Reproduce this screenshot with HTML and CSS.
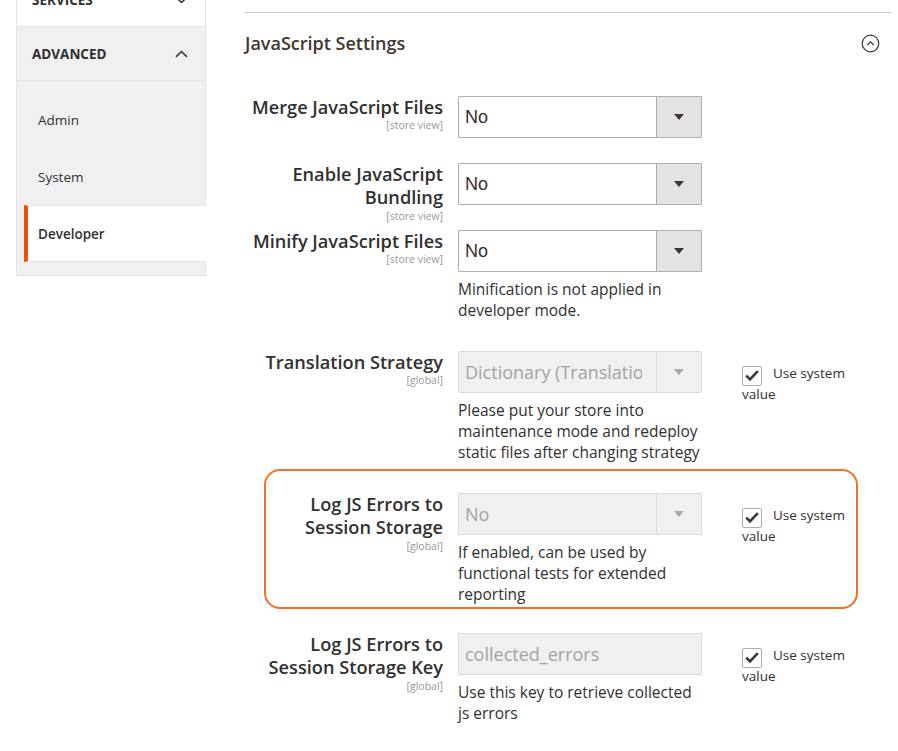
FILE: index.html
```html
<!DOCTYPE html>
<html lang="en">
<head>
<meta charset="utf-8">
<title>Configuration - Developer</title>
<link rel="stylesheet" href="styles.css">
</head>
<body>
<div class="page">
  <aside class="sidebar">
    <div class="nav-section">
      <div class="nav-title">
        <span>SERVICES</span>
        <svg class="chev" width="13" height="8" viewBox="0 0 13 8"><path d="M1 1.2 L6.5 6.5 L12 1.2" fill="none" stroke="#41362f" stroke-width="1.6"/></svg>
      </div>
    </div>
    <div class="nav-section open">
      <div class="nav-title">
        <span>ADVANCED</span>
        <svg class="chev" width="13" height="8" viewBox="0 0 13 8"><path d="M1 6.8 L6.5 1.5 L12 6.8" fill="none" stroke="#41362f" stroke-width="1.6"/></svg>
      </div>
      <ul class="nav-items">
        <li class="nav-item">Admin</li>
        <li class="nav-item">System</li>
        <li class="nav-item active">Developer</li>
      </ul>
    </div>
  </aside>

  <main class="main">
    <section class="config-section">
      <header class="section-head">
        <h2 class="section-title">JavaScript Settings</h2>
        <svg class="collapse" width="19" height="19" viewBox="0 0 19 19"><circle cx="9.5" cy="9.5" r="8.3" fill="none" stroke="#41362f" stroke-width="1.2"/><path d="M6.3 11 L9.5 7.8 L12.7 11" fill="none" stroke="#41362f" stroke-width="1.3"/></svg>
      </header>

      <div class="field">
        <div class="field-label">
          <span class="label-text">Merge JavaScript Files</span>
          <span class="scope">[store view]</span>
        </div>
        <div class="control">
          <div class="select">
            <span class="select-value">No</span>
            <span class="select-arrow"><i class="tri"></i></span>
          </div>
        </div>
      </div>

      <div class="field">
        <div class="field-label">
          <span class="label-text">Enable JavaScript Bundling</span>
          <span class="scope">[store view]</span>
        </div>
        <div class="control">
          <div class="select">
            <span class="select-value">No</span>
            <span class="select-arrow"><i class="tri"></i></span>
          </div>
        </div>
      </div>

      <div class="field">
        <div class="field-label">
          <span class="label-text">Minify JavaScript Files</span>
          <span class="scope">[store view]</span>
        </div>
        <div class="control">
          <div class="select">
            <span class="select-value">No</span>
            <span class="select-arrow"><i class="tri"></i></span>
          </div>
          <p class="note">Minification is not applied in developer mode.</p>
        </div>
      </div>

      <div class="field">
        <div class="field-label">
          <span class="label-text">Translation Strategy</span>
          <span class="scope">[global]</span>
        </div>
        <div class="control">
          <div class="select disabled">
            <span class="select-value">Dictionary (Translation on Storefront side)</span>
            <span class="select-arrow"><i class="tri"></i></span>
          </div>
          <p class="note">Please put your store into maintenance mode and redeploy static files after changing strategy</p>
        </div>
        <label class="use-default"><span class="checkbox"><svg width="20" height="20" viewBox="0 0 20 20"><path d="M4.2 9.6 L8 13.3 L15.8 5.2" fill="none" stroke="#41362f" stroke-width="2.6"/></svg></span>Use system value</label>
      </div>

      <div class="field highlight">
        <div class="field-label">
          <span class="label-text">Log JS Errors to Session Storage</span>
          <span class="scope">[global]</span>
        </div>
        <div class="control">
          <div class="select disabled">
            <span class="select-value">No</span>
            <span class="select-arrow"><i class="tri"></i></span>
          </div>
          <p class="note">If enabled, can be used by functional tests for extended reporting</p>
        </div>
        <label class="use-default"><span class="checkbox"><svg width="20" height="20" viewBox="0 0 20 20"><path d="M4.2 9.6 L8 13.3 L15.8 5.2" fill="none" stroke="#41362f" stroke-width="2.6"/></svg></span>Use system value</label>
      </div>

      <div class="field">
        <div class="field-label">
          <span class="label-text">Log JS Errors to Session Storage Key</span>
          <span class="scope">[global]</span>
        </div>
        <div class="control">
          <div class="input disabled">collected_errors</div>
          <p class="note">Use this key to retrieve collected js errors</p>
        </div>
        <label class="use-default"><span class="checkbox"><svg width="20" height="20" viewBox="0 0 20 20"><path d="M4.2 9.6 L8 13.3 L15.8 5.2" fill="none" stroke="#41362f" stroke-width="2.6"/></svg></span>Use system value</label>
      </div>
    </section>
  </main>
</div>
</body>
</html>
```

FILE: styles.css
```css
html, body {
  margin: 0;
  padding: 0;
  background: #fff;
}

body {
  font-family: "Open Sans", "Noto Sans", sans-serif;
  color: #303030;
  overflow: hidden;
}

.page {
  display: flex;
  align-items: flex-start;
  padding-left: 16px;
}

/* ---------- sidebar ---------- */
.sidebar {
  width: 190px;
  flex-shrink: 0;
  box-sizing: border-box;
  margin-top: -27px;
  border-left: 1px solid #e3e3e3;
  border-right: 1px solid #e3e3e3;
}

.nav-section {
  background: #fff;
}

.nav-section.open {
  background: #f0f0f0;
}

.nav-title {
  height: 53px;
  border-bottom: 1px solid #e3e3e3;
  display: flex;
  align-items: center;
  justify-content: space-between;
  padding: 0 17px 0 15px;
  font-size: 13.5px;
  font-weight: 700;
  color: #303030;
}

.chev {
  display: block;
}

.nav-items {
  list-style: none;
  margin: 0;
  padding: 10px 0 13px;
  border-bottom: 1px solid #e3e3e3;
}

.nav-item {
  height: 57px;
  box-sizing: border-box;
  display: flex;
  align-items: center;
  padding-left: 21px;
  font-size: 13.5px;
  color: #303030;
}

.nav-item.active {
  margin-left: 7px;
  margin-right: -1px;
  padding-left: 10px;
  border-left: 4px solid #eb5202;
  border-top: 1px solid #e3e3e3;
  border-bottom: 1px solid #e3e3e3;
  background: #fff;
  font-weight: 600;
}

/* ---------- main ---------- */
.main {
  margin-left: 39px;
  width: 646px;
  padding-top: 12px;
}

.config-section {
  border-top: 1px solid #cccccc;
}

.section-head {
  display: flex;
  align-items: center;
  justify-content: space-between;
  padding: 18px 0 41px;
}

.section-title {
  margin: 0;
  font-size: 18px;
  line-height: 24px;
  font-weight: 600;
  color: #41362f;
}

.collapse {
  display: block;
  margin-right: 11px;
}

.field {
  display: flex;
  align-items: flex-start;
  margin-bottom: 25px;
}

.field.highlight {
  position: relative;
  margin-bottom: 23px;
}

.field.highlight::before {
  content: "";
  position: absolute;
  top: -24px;
  left: 19px;
  right: 33px;
  bottom: 1px;
  border: 2px solid #f5711e;
  border-radius: 16px;
  pointer-events: none;
}

.field-label {
  width: 198px;
  flex-shrink: 0;
  text-align: right;
  margin-top: 0;
  margin-bottom: -18px;
}

.label-text {
  display: block;
  font-size: 18.2px;
  line-height: 23.4px;
  font-weight: 600;
  color: #303030;
}

.scope {
  display: block;
  font-size: 10.5px;
  line-height: 12.6px;
  color: #999;
}

.control {
  width: 244px;
  flex-shrink: 0;
  margin-left: 15px;
}

.select {
  display: flex;
  height: 42px;
  box-sizing: border-box;
  border: 1px solid #adadad;
  border-radius: 1px;
  background: #fff;
}

.select-value {
  flex: 1;
  min-width: 0;
  margin-right: 14px;
  padding-left: 6px;
  line-height: 40px;
  font-family: "Liberation Sans", Arial, sans-serif;
  font-size: 18px;
  color: #303030;
  white-space: nowrap;
  overflow: hidden;
}

.select-arrow {
  width: 44px;
  flex-shrink: 0;
  border-left: 1px solid #adadad;
  background: #e3e3e3;
  display: flex;
  align-items: center;
  justify-content: center;
}

.tri {
  display: block;
  width: 0;
  height: 0;
  border-left: 5px solid transparent;
  border-right: 5px solid transparent;
  border-top: 6px solid #41362f;
}

.select.disabled {
  background: #f0f0f0;
  border-color: #dadada;
}

.select.disabled .select-value {
  font-family: "Open Sans", "Noto Sans", sans-serif;
  color: #a3a3a3;
}

.select.disabled .select-arrow {
  background: transparent;
  border-left-color: #dadada;
}

.select.disabled .tri {
  border-top-color: #a8a8a8;
}

.input {
  height: 42px;
  box-sizing: border-box;
  border: 1px solid #dadada;
  border-radius: 1px;
  background: #f0f0f0;
  padding-left: 6px;
  line-height: 40px;
  font-size: 18px;
  color: #a3a3a3;
  white-space: nowrap;
  overflow: hidden;
}

.note {
  margin: 7px 0 0;
  padding-bottom: 5px;
  font-size: 15.5px;
  line-height: 21px;
  color: #303030;
}

.use-default {
  width: 110px;
  flex-shrink: 0;
  margin-left: 40px;
  padding-top: 12px;
  font-size: 13.5px;
  line-height: 21px;
  color: #303030;
}

.checkbox {
  display: inline-block;
  width: 20px;
  height: 20px;
  box-sizing: border-box;
  border: 1px solid #adadad;
  border-radius: 2px;
  background: #fff;
  vertical-align: top;
  margin: 3px 11px -2px 0;
  position: relative;
}

.checkbox svg {
  position: absolute;
  left: -1px;
  top: -1px;
}
```
